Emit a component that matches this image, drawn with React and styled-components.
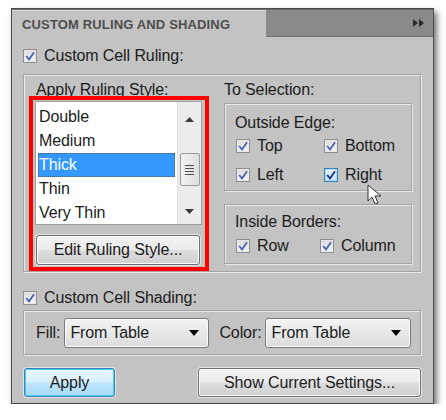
import React from 'react';
import styled, { createGlobalStyle, css } from 'styled-components';

const GlobalStyle = createGlobalStyle`
  body {
    margin: 0;
    background: #ffffff;
    font-family: "Liberation Sans", Arial, sans-serif;
  }
`;

const Panel = styled.div`
  margin: 8px 0 0 11px;
  width: 423px;
  height: 396px;
  box-sizing: border-box;
  border: 1px solid #4a4a4a;
  background: #c3c3c3;
  box-shadow: 3px 4px 6px rgba(0, 0, 0, 0.55);
  display: flex;
  flex-direction: column;
`;

const Header = styled.div`
  height: 28px;
  display: flex;
  background: #8a8a8a;
  border-top: 1px solid #6e6e6e;
  box-sizing: border-box;
`;

const Tab = styled.div`
  width: 254px;
  background: #c3c3c3;
  border-top: 1px solid #d8d8d8;
  box-sizing: border-box;
  display: flex;
  align-items: center;
  padding-left: 10px;
  font-size: 13px;
  font-weight: bold;
  color: #4e4e4e;
  letter-spacing: 0.15px;
`;

const HeaderFill = styled.div`
  flex: 1;
  display: flex;
  justify-content: flex-end;
  align-items: center;
  padding-right: 9px;
  border-bottom: 1px solid #707070;
`;

const Content = styled.div`
  padding: 11px 12px 0 11px;
  display: flex;
  flex-direction: column;
  font-size: 16px;
  letter-spacing: -0.1px;
  color: #1c1c1c;
`;

const CheckRow = styled.label`
  display: flex;
  align-items: center;
  gap: ${p => p.$gap || 7}px;
  height: 16px;
  white-space: nowrap;
  margin-top: ${p => p.$mt || 0}px;
  margin-bottom: ${p => p.$mb || 0}px;
`;

const Box = styled.span`
  width: 14px;
  height: 14px;
  box-sizing: border-box;
  border: 1px solid ${p => (p.$hot ? '#3c7fb1' : '#8f8f8f')};
  background: ${p =>
    p.$hot
      ? 'linear-gradient(#def3fc, #bfe4f7)'
      : 'linear-gradient(#dcdcdc, #f4f4f4)'};
  box-shadow: inset 0 0 0 1px ${p => (p.$hot ? '#a9d8f0' : '#e8e8e8')};
  display: flex;
  align-items: center;
  justify-content: center;
  flex: none;
`;

const Group = styled.div`
  border: 1px solid #a3a3a3;
  box-shadow: inset 1px 1px 0 #e9e9e9, 1px 1px 0 #e9e9e9;
  box-sizing: border-box;
`;

const RulingGroup = styled(Group)`
  height: 198px;
  display: flex;
  padding: 7px 0 0 5px;
  gap: 15px;
`;

const Column = styled.div`
  display: flex;
  flex-direction: column;
`;

const Caption = styled.div`
  height: 14px;
  line-height: 16px;
  padding-left: ${p => p.$pl || 0}px;
  margin-bottom: ${p => p.$mb || 0}px;
  white-space: nowrap;
`;

const RedFrame = styled.div`
  width: 180px;
  height: 175px;
  box-sizing: border-box;
  border: 4px solid #ff0000;
  padding: 1px 3px 0 2px;
  display: flex;
  flex-direction: column;
  background: #c3c3c3;
  position: relative;
`;

const ListBox = styled.div`
  height: 124px;
  box-sizing: border-box;
  border: 1px solid #a0a0a0;
  background: #ffffff;
  display: flex;
`;

const Items = styled.div`
  flex: 1;
  padding: 3px 2px 0 2px;
  overflow: hidden;
`;

const Item = styled.div`
  height: 24px;
  line-height: 24px;
  padding-left: 1px;
  color: ${p => (p.$selected ? '#ffffff' : '#1c1c1c')};
  background: ${p => (p.$selected ? '#3399ff' : 'transparent')};
  ${p =>
    p.$selected &&
    css`
      outline: 1px dotted #5a5a5a;
      outline-offset: -1px;
    `}
`;

const Scrollbar = styled.div`
  width: 24px;
  background: #ececec;
  border-left: 1px solid #e0e0e0;
  display: flex;
  flex-direction: column;
  align-items: center;
  padding-top: 15px;
  box-sizing: border-box;
`;

const Thumb = styled.div`
  width: 20px;
  height: 33px;
  margin: 31px 0 23px;
  box-sizing: border-box;
  border: 1px solid #9a9a9a;
  border-radius: 2px;
  background: linear-gradient(to right, #f3f3f3, #dedede);
  display: flex;
  flex-direction: column;
  align-items: center;
  justify-content: center;
  gap: 2px;
`;

const Grip = styled.span`
  width: 9px;
  height: 1px;
  background: #4a4a4a;
`;

const button = css`
  box-sizing: border-box;
  border-radius: 3px;
  font-family: inherit;
  font-size: 16px;
  letter-spacing: -0.1px;
  color: #1c1c1c;
  display: flex;
  align-items: center;
  justify-content: center;
  padding: 0;
`;

const Button = styled.button`
  ${button};
  width: ${p => p.$w}px;
  height: ${p => p.$h || 29}px;
  border: 1px solid #707070;
  background: linear-gradient(#f2f2f2 0%, #ebebeb 48%, #dddddd 52%, #cfcfcf 100%);
  box-shadow: inset 0 0 0 1px #fbfbfb, 0 0 0 1px #e4e4e4;
`;

const PrimaryButton = styled.button`
  ${button};
  width: ${p => p.$w}px;
  height: 29px;
  border: 1px solid #3c7fb1;
  background: linear-gradient(#eaf6fd 0%, #d9f0fc 48%, #bee6fd 52%, #a7d9f5 100%);
  box-shadow: inset 0 0 0 1px #48d1fb, 0 0 0 1px #e4e4e4;
`;

const RightColumn = styled(Column)`
  width: 188px;
`;

const SubGroup = styled(Group)`
  padding: ${p => p.$pt}px 0 0 10px;
  height: ${p => p.$h}px;
  margin-top: ${p => p.$mt || 0}px;
  display: flex;
  flex-direction: column;
  position: relative;
`;

const CheckGrid = styled.div`
  display: grid;
  grid-template-columns: ${p => p.$col}px auto;
  row-gap: 13px;
  padding-left: 1px;
`;

const ShadingGroup = styled(Group)`
  height: 45px;
  display: flex;
  align-items: center;
  padding-left: 12px;
`;

const Select = styled.div`
  ${button};
  width: ${p => p.$w}px;
  height: 30px;
  border: 1px solid #7a7a7a;
  background: linear-gradient(#f4f4f4, #dcdcdc);
  box-shadow: inset 0 0 0 1px #fafafa;
  justify-content: space-between;
  padding: 0 9px 0 5px;
  margin-left: ${p => p.$ml || 0}px;
  margin-right: ${p => p.$mr || 0}px;
`;

const Footer = styled.div`
  display: flex;
  justify-content: space-between;
  margin-top: 13px;
  padding: 0 0 0 1px;
`;

const Cursor = styled.svg`
  position: absolute;
  left: 142px;
  top: 80px;
`;

const Tick = ({ hot }) => (
  <svg width="10" height="10" viewBox="0 0 10 10">
    <path
      d="M1.2 5 L4 8.4 L9 1.2"
      fill="none"
      stroke={hot ? '#1f2f86' : '#4c63b4'}
      strokeWidth="1.8"
    />
  </svg>
);

const Check = ({ label, hot, mt, mb }) => (
  <CheckRow $mt={mt} $mb={mb}>
    <Box $hot={hot}>
      <Tick hot={hot} />
    </Box>
    {label}
  </CheckRow>
);

const Arrow = ({ dir }) => (
  <svg width="9" height="5" viewBox="0 0 9 5">
    <path d={dir === 'up' ? 'M0 5 L4.5 0 L9 5 Z' : 'M0 0 L4.5 5 L9 0 Z'} fill="#3a3a3a" />
  </svg>
);

const DropArrow = () => (
  <svg width="10" height="6" viewBox="0 0 10 6">
    <path d="M0 0 L5 6 L10 0 Z" fill="#000" />
  </svg>
);

const styles = ['Double', 'Medium', 'Thick', 'Thin', 'Very Thin'];

export default function App() {
  return (
    <>
      <GlobalStyle />
      <Panel>
        <Header>
          <Tab>CUSTOM RULING AND SHADING</Tab>
          <HeaderFill>
            <svg width="11" height="8" viewBox="0 0 11 8">
              <path d="M0 0 L5 4 L0 8 Z M6 0 L11 4 L6 8 Z" fill="#2a2a2a" />
            </svg>
          </HeaderFill>
        </Header>
        <Content>
          <Check label="Custom Cell Ruling:" mb={10} />
          <RulingGroup>
            <Column>
              <Caption $pl={7}>Apply Ruling Style:</Caption>
              <RedFrame>
                <ListBox>
                  <Items>
                    {styles.map(s => (
                      <Item key={s} $selected={s === 'Thick'}>
                        {s}
                      </Item>
                    ))}
                  </Items>
                  <Scrollbar>
                    <Arrow dir="up" />
                    <Thumb>
                      <Grip />
                      <Grip />
                      <Grip />
                      <Grip />
                    </Thumb>
                    <Arrow dir="down" />
                  </Scrollbar>
                </ListBox>
                <div style={{ marginTop: 10, paddingLeft: 1 }}>
                  <Button $w={164} $h={30}>Edit Ruling Style...</Button>
                </div>
              </RedFrame>
            </Column>
            <RightColumn>
              <Caption $mb={7}>To Selection:</Caption>
              <SubGroup $pt={11} $h={88}>
                <Caption $mb={9}>Outside Edge:</Caption>
                <CheckGrid $col={88}>
                  <Check label="Top" />
                  <Check label="Bottom" />
                  <Check label="Left" />
                  <Check label="Right" hot />
                </CheckGrid>
                <Cursor width="16" height="22" viewBox="0 0 16 22">
                  <path
                    d="M1 1 L1 17 L5 13 L8 20 L11 19 L8 12 L14 12 Z"
                    fill="#ffffff"
                    stroke="#333"
                    strokeWidth="1"
                    strokeLinejoin="round"
                  />
                </Cursor>
              </SubGroup>
              <SubGroup $pt={9} $h={60} $mt={13}>
                <Caption $mb={10}>Inside Borders:</Caption>
                <CheckGrid $col={84}>
                  <Check label="Row" />
                  <Check label="Column" />
                </CheckGrid>
              </SubGroup>
            </RightColumn>
          </RulingGroup>
          <Check label="Custom Cell Shading:" mt={18} mb={4} />
          <ShadingGroup>
            Fill:
            <Select $w={145} $ml={4} $mr={10}>
              From Table
              <DropArrow />
            </Select>
            Color:
            <Select $w={146} $ml={4}>
              From Table
              <DropArrow />
            </Select>
          </ShadingGroup>
          <Footer>
            <PrimaryButton $w={91}>Apply</PrimaryButton>
            <Button $w={223} $h={29}>Show Current Settings...</Button>
          </Footer>
        </Content>
      </Panel>
    </>
  );
}
